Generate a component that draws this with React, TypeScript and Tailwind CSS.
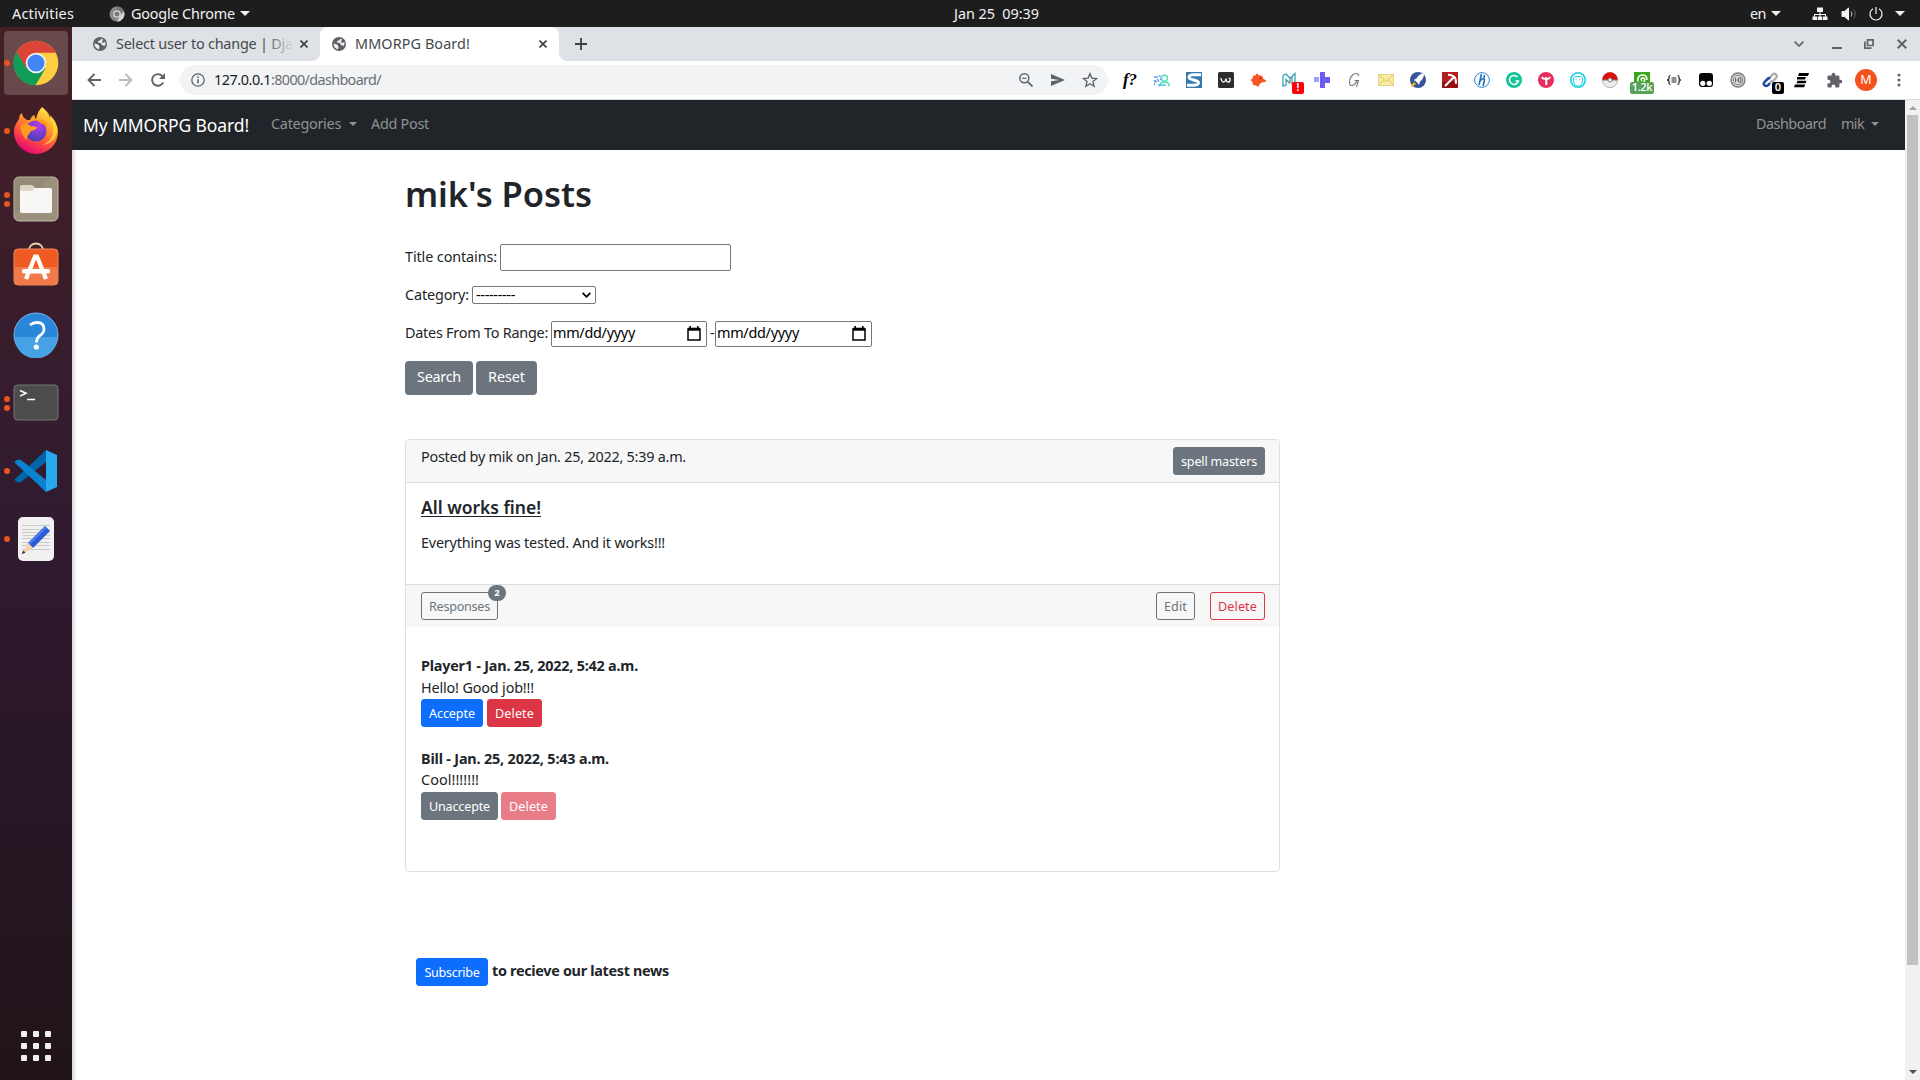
import React, { useLayoutEffect, useRef, useState } from "react";

/* Text run that spreads its letters so that it fills exactly `w` pixels. */
function T({ w, c = "", children }: { w: number; c?: string; children: string }) {
  const ref = useRef<HTMLSpanElement>(null);
  const [ls, setLs] = useState(0);
  useLayoutEffect(() => {
    if (!ref.current) return;
    const natural = ref.current.getBoundingClientRect().width - ls * children.length;
    setLs((w - natural) / children.length);
  }, []);
  return (
    <span className={"block shrink-0 whitespace-pre " + c} style={{ width: w }}>
      <span ref={ref} style={{ letterSpacing: ls }}>{children}</span>
    </span>
  );
}

const Caret = ({ c = "h-[5px] w-[10px]" }: { c?: string }) => (
  <svg viewBox="0 0 10 5" className={"shrink-0 " + c} fill="currentColor"><path d="M0 0h10L5 5z" /></svg>
);

/* ---------- top bar ---------- */
function TopBar() {
  return (
    <div className="flex h-[27px] shrink-0 items-center bg-[#1d1d1d] text-[14.4px] text-[#f2f2f2]">
      <T w={62} c="ml-[12px]">Activities</T>
      <svg viewBox="0 0 16 16" className="ml-[35px] size-4">
        <circle cx="8" cy="8" r="7.5" fill="#8a8a8a" />
        <path d="M8 .5a7.5 7.5 0 0 1 7 5H8z" fill="#777" />
        <path d="M15 5.500a7.500 7.500 0 0 1-7 10l3.500-6z" fill="#d5d5d5" />
        <circle cx="8" cy="8" r="3.600" fill="#eee" /><circle cx="8" cy="8" r="2.600" fill="#777" />
      </svg>
      <T w={104} c="ml-[6px]">Google Chrome</T>
      <Caret c="ml-[5px] h-[5px] w-[10px]" />
      <T w={85} c="ml-[704px]">Jan 25  09:39</T>
      <T w={16} c="ml-[711px]">en</T>
      <Caret c="ml-[5px] h-[5px] w-[10px]" />
      <svg viewBox="0 0 16 14" className="ml-[31px] h-[14px] w-4" fill="currentColor">
        <path d="M5 .5h6V5H5zM.5 9.500h4.500V13H.5zM5.700 9.500h4.600V13H5.700zM11 9.500h4.500V13H11zM7.500 5h1v2H14v2.500h-1V8H8.500v1.500h-1V8H3v1.500H2V7h5.500z" />
      </svg>
      <svg viewBox="0 0 16 14" className="ml-[13px] h-[14px] w-4" fill="none" stroke="currentColor">
        <path d="M1 4.500h2.500L7.500 1v12L3.500 9.500H1z" fill="currentColor" />
        <path d="M10 4.500q2 2.500 0 5" opacity=".8" /><path d="M12.500 2.500q3.500 4.500 0 9" opacity=".35" />
      </svg>
      <svg viewBox="0 0 16 16" className="ml-[11px] size-4" fill="none" stroke="currentColor" strokeWidth="1.200">
        <path d="M8 1v7M5 2.800a6 6 0 1 0 6 0" />
      </svg>
      <Caret c="ml-[11px] h-[5px] w-[10px]" />
    </div>
  );
}

/* ---------- dock ---------- */
function DockItem({ dots = 0, active = false, children }: { dots?: number; active?: boolean; children: React.ReactNode }) {
  return (
    <div className="flex h-[64px] shrink-0 items-center">
      <div className="flex w-[4px] flex-col gap-[3px]">
        {Array.from({ length: dots }, (_, i) => (
          <i key={i} className="relative z-10 ml-[4px] size-[6px] rounded-full bg-[#e95420]" />
        ))}
      </div>
      <div className={"flex size-[64px] items-center justify-center rounded-[4px] " + (active ? "bg-[#694a4c]" : "")}>{children}</div>
    </div>
  );
}

function Dock() {
  return (
    <div className="flex w-[72px] shrink-0 flex-col gap-1 bg-linear-to-b from-[#451f25] via-[#2f1a30] to-[#201419] pt-[4px]">
      <DockItem dots={1} active>
        <svg viewBox="0 0 46 46" className="size-[46px]">
          <circle cx="23" cy="23" r="22.300" fill="#ffcd40" />
          <path d="M23 23 32.500 28.500 22.500 45.300A22.300 22.300 0 0 1 3.500 12z" fill="#0f9d58" />
          <path d="M3.500 12A22.300 22.300 0 0 1 42.800 12.800H23l-9.500 15.700z" fill="#db4437" />
          <circle cx="23" cy="23" r="10.300" fill="#f1f1f1" /><circle cx="23" cy="23" r="8.600" fill="#4285f4" />
        </svg>
      </DockItem>
      <DockItem dots={1}>
        <svg viewBox="0 0 46 48" className="h-[48px] w-[46px] -translate-y-px">
          <defs>
            <linearGradient id="fx" x1=".8" y1="0" x2=".3" y2="1"><stop offset="0" stopColor="#fff44f" /><stop offset=".35" stopColor="#ffa127" /><stop offset=".68" stopColor="#ff4b42" /><stop offset="1" stopColor="#e3007c" /></linearGradient>
            <radialGradient id="fp" cx=".65" cy=".2" r=".8"><stop offset="0" stopColor="#b63cf5" /><stop offset="1" stopColor="#4a3fb0" /></radialGradient>
          </defs>
          <path d="M29 1c4 3 7 7 8 11 1-1 0-3 0-3 5 5 8 11 8 17a22 22 0 0 1-44 0C1 20 4 16 6 13c0-3 1-5 3-6 0 3 2 5 5 7h3c1-3 3-5 5-5-1 2 0 3 1 4 1-5 3-9 6-12z" fill="url(#fx)" />
          <path d="M30 2c5 4 9 10 10 18 2 10-4 17-11 19 10-1 16-8 15-17-1-5-3-9-7-12-1-3-4-6-7-8z" fill="#ffe13d" opacity=".75" />
          <circle cx="23" cy="25" r="10.500" fill="url(#fp)" />
          <path d="M7 20c4-3 8-2 11 0l6 1c0 3-3 3-6 4-2 4-5 5-4 9-4-3-6-8-7-14z" fill="#ff9a1f" />
          <path d="M24 15c5-3 10 0 11 6-2-2-4-3-6-3z" fill="#ff980e" />
        </svg>
      </DockItem>
      <DockItem dots={2}>
        <svg viewBox="0 0 46 46" className="size-[46px]">
          <rect x="1" y="1" width="44" height="44" rx="5" fill="#9b927e" stroke="#c2baa8" />
          <path d="M1.500 38 38 1.500H6a4.500 4.500 0 0 0-4.500 4.500z" fill="#8d8674" opacity=".6" />
          <path d="M7 17V11q0-2 2-2h10l4 3.500V17z" fill="#dcd5c3" />
          <path d="M7 15h12l3-3h15q2 0 2 2v21q0 2-2 2H9q-2 0-2-2z" fill="#f8f7f5" />
        </svg>
      </DockItem>
      <DockItem>
        <svg viewBox="0 0 46 44" className="h-[44px] w-[46px] -translate-y-[3px]">
          <path d="M16 9V8a7 6.500 0 0 1 14 0v1" fill="none" stroke="#e9d2a7" strokeWidth="1.800" />
          <rect x="1" y="7" width="44" height="36" rx="4" fill="#ef5b22" stroke="#f28a5c" />
          <path d="M1.500 25h43v14q0 3.500-3.500 3.500H5q-3.500 0-3.500-3.500z" fill="#f27a49" />
          <path d="m13 37 9-22.500h2L33 37" fill="none" stroke="#fff" strokeWidth="4.200" />
          <rect x="9" y="27" width="28" height="4.500" rx="2" fill="#fff" />
        </svg>
      </DockItem>
      <DockItem>
        <svg viewBox="0 0 46 46" className="size-[46px]">
          <circle cx="23" cy="23" r="22" fill="#2a86d8" stroke="#79b9e8" />
          <path d="M1.500 25h43a21.500 21.500 0 0 1-43 0z" fill="#46a2e4" />
          <path d="M17 13q3-2.500 7-2.500 7 0 7 6.500 0 4-4 6.500-3.500 2.500-3.500 7" fill="none" stroke="#fff" strokeWidth="2.800" /><circle cx="23.300" cy="35" r="2.600" fill="#fff" />
        </svg>
      </DockItem>
      <DockItem dots={2}>
        <svg viewBox="0 0 46 38" className="h-[38px] w-[46px]">
          <rect x="1" y="1" width="44" height="35" rx="3.500" fill="#4c4c4c" stroke="#777" />
          <path d="m7 6.500 6 2.800-6 2.800M14 15.500h8" fill="none" stroke="#fff" strokeWidth="1.600" />
        </svg>
      </DockItem>
      <DockItem dots={1}>
        <svg viewBox="0 0 44 44" className="size-[44px]">
          <path d="M1 30 32 1v12L7 33q-2 1-4 0l-2-1.500q-1-1 0-1.500z" fill="#0065a9" />
          <path d="M1 14 32 43V31L7 11q-2-1-4 0l-2 1.500q-1 1 0 1.500z" fill="#0a82cf" />
          <path d="M32 1 43 6v32l-11 5V1z" fill="#27a8ef" />
        </svg>
      </DockItem>
      <DockItem dots={1}>
        <svg viewBox="0 0 38 46" className="h-[46px] w-[38px]">
          <rect x="1" y="1" width="36" height="44" rx="5" fill="#f0f0f0" />
          <path d="M5 9.500h28M5 13.500h28M5 16.500h28M5 19.500h28M5 22.500h28M5 26.500h28M5 29.500h28M5 33.500h28" stroke="#ccc" />
          <path d="m11 27 17-17 5 5-17 17z" fill="#2b5bd7" /><path d="m11 27 17-17 1.700 1.700-17 17z" fill="#4f7df0" />
          <path d="m11 27 5 5-9 5-2.300 1z" fill="#f3d3a9" /><path d="m6.200 34.500 2.400 2.200L4.700 38z" fill="#333" />
        </svg>
      </DockItem>
      <div className="mt-auto mb-[19px] ml-[21px] grid w-[30px] grid-cols-3 gap-[6px]">
        {Array.from({ length: 9 }, (_, i) => <i key={i} className="size-[6px] rounded-[1px] bg-[#f0eeec]" />)}
      </div>
    </div>
  );
}

/* ---------- browser chrome ---------- */
const Globe = ({ c }: { c: string }) => (
  <svg viewBox="0 0 14 14" className={"size-[14px] shrink-0 " + c}>
    <circle cx="7" cy="7" r="7" fill="#5f6368" />
    <path d="M1.500 6.500 5 7.500l1.500 2L6 12.500Q1.500 11 1.500 6.500zM8.500 1.800 7 3.500 5 4v1.500l3 .5 1 2 2.500 1q1.500-2 1-4L10 6 8.800 4.500l1.500-1.700z" fill="#fff" opacity=".9" />
  </svg>
);
const X = ({ c = "" }: { c?: string }) => (
  <svg viewBox="0 0 8 8" className={"size-2 shrink-0 " + c} stroke="currentColor" strokeWidth="1.600"><path d="m.5.5 7 7m0-7-7 7" /></svg>
);

function TabStrip() {
  return (
    <div className="flex h-[34px] shrink-0 items-center bg-[#dee1e6] text-[14.4px] text-[#45494d]">
      <div className="flex h-full w-[248px] shrink-0 items-center">
        <Globe c="ml-[21px]" />
        <div className="relative ml-[9px] w-[176px]">
          <T w={177}>Select user to change | Dja</T>
          <div className="absolute inset-y-0 -right-[2px] w-[30px] bg-linear-to-r from-transparent to-[#dee1e6]" />
        </div>
        <X c="ml-[8px] text-[#3c4043]" />
      </div>
      <div className="relative flex h-full w-[239px] shrink-0 items-center rounded-t-[8px] bg-white">
        <svg viewBox="0 0 8 8" className="absolute bottom-0 -left-2 size-2" fill="#fff"><path d="M8 0v8H0a8 8 0 0 0 8-8z" /></svg>
        <svg viewBox="0 0 8 8" className="absolute -right-2 bottom-0 size-2" fill="#fff"><path d="M0 0v8h8a8 8 0 0 1-8-8z" /></svg>
        <Globe c="ml-[12px]" />
        <T w={115} c="ml-[9px]">MMORPG Board!</T>
        <X c="ml-[69px] text-[#3c4043]" />
      </div>
      <svg viewBox="0 0 12 12" className="ml-[16px] size-3" stroke="#3c4043" strokeWidth="1.800"><path d="M6 0v12M0 6h12" /></svg>
      <div className="mr-[13px] ml-auto flex items-center text-[#5f6368]">
        <svg viewBox="0 0 10 6" className="h-[6px] w-[10px]" fill="none" stroke="currentColor" strokeWidth="1.700"><path d="m.6.600 4.400 4.400L9.400.600" /></svg>
        <i className="mt-[8px] ml-[28px] h-[2px] w-[10px] bg-[#5f6368]" />
        <svg viewBox="0 0 10 10" className="ml-[22px] size-[10px]" fill="none" stroke="currentColor" strokeWidth="1.700"><path d="M3.500.900h5.600v5.600H3.500zM.9 2.500v6.700h6.600" /></svg>
        <svg viewBox="0 0 10 10" className="ml-[23px] size-[10px]" stroke="currentColor" strokeWidth="2"><path d="m.7.700 8.600 8.600m0-8.600L.7 9.300" /></svg>
      </div>
    </div>
  );
}

const Ext = ({ children }: { children: React.ReactNode }) => (
  <div className="relative flex w-8 shrink-0 items-center justify-center">{children}</div>
);
const S = ({ children }: { children: React.ReactNode }) => (
  <svg viewBox="0 0 16 16" className="size-4" fill="none">{children}</svg>
);

function Extensions() {
  return (
    <div className="ml-[6px] flex">
      <Ext><span className="font-['Liberation_Serif'] text-[17px] leading-4 font-bold text-black italic">f?</span></Ext>
      <Ext><S>
        <g stroke="#4d8df0" strokeWidth="1.300"><circle cx="5" cy="6" r="2.200" strokeDasharray="2 1" /><path d="M0 13q1-4 5-4M0 5h2M0 9h2" strokeDasharray="2 1" /></g>
        <g stroke="#4fe0b5" strokeWidth="1.400"><circle cx="10.500" cy="6.300" r="3" /><path d="M5.500 14.500q.5-4.500 5-4.500t5 4.500" /><path d="M4 13h8" stroke="#3fc4d8" /></g>
      </S></Ext>
      <Ext><S><rect width="16" height="16" fill="#3579ac" /><path d="M15 2.800H7.500Q3 2.800 3 5.300c0 3.200 9.500 2.200 9.500 5.400 0 2.500-3 2.600-6 2.600H1" stroke="#fff" strokeWidth="2.900" /></S></Ext>
      <Ext><S><rect width="16" height="16" rx="1.500" fill="#2d2d2d" /><path d="M3 6q.5 4 2.500 4T8 6.500Q8 10 10.300 10T12 6.500L10.500 6" stroke="#fff" strokeWidth="1.300" /></S></Ext>
      <Ext><S><path d="m.5 8 2-1.500L3 4l3-1 1-2 1.500 2 4 1 .5 2.500L16 8.500l-.5 1.500-4 .5-2 2L8 15l-2-1.500-3-.5-.5-3z" fill="#fb5424" /><circle cx="10.500" cy="6.500" r=".8" fill="#7c2108" /></S></Ext>
      <Ext><S><path d="M1 3.200v11L4 13V7.500l4 4M1 3.200 4 2l4 4.500L13 1.500v12M8 6.500v5M10 5v7l3-2" stroke="#2c9ab0" strokeWidth="1.200" /><path d="M7.500 8v3" stroke="#ee8a4c" strokeWidth="1.300" /></S>
        <span className="absolute top-[10px] left-[18px] flex h-3 w-3 items-center justify-center rounded-[2px] bg-[#fd0008] text-[10px] font-bold text-white">!</span></Ext>
      <Ext><S><path d="M6 0h5v5h5v6h-5v5H6v-5z" fill="#6c5cf6" /><path d="M0 5h5v5H0z" fill="#9aa3f8" /></S></Ext>
      <Ext><S><path d="M12.500 4q0-3-3-2.500C5.500 2 3.500 7 3.500 10.500c0 5 5.500 3.500 7.500-2H8.500M11 8.500h1.500Q11 13 10.500 15" stroke="#777" strokeWidth="1.100" /></S></Ext>
      <Ext><S><rect x=".5" y="2.500" width="15" height="11" fill="#f9eda1" stroke="#e6d48b" /><path d="m1 3 7 6.500L15 3M1 13l5-5.500M15 13l-5-5.500" stroke="#d9c470" /></S></Ext>
      <Ext><S><circle cx="8" cy="8" r="8" fill="#35549b" /><path d="M14 1.500q-5 0-7.500 5L3.500 8l2 1 2 2 1.500 2 1-3.500q4-3 4-8z" fill="#fff" /><path d="m1 14 3-4 2 2-4 3z" fill="#fcb813" /></S></Ext>
      <Ext><S><rect width="16" height="16" fill="#b41e21" /><path d="M0 10h16v6H0z" fill="#930f12" /><path d="m3 14 8.500-8.500M6 2.700q5 .3 7 3 1.300 2 1 6" stroke="#fff" strokeWidth="2" /></S></Ext>
      <Ext><S><circle cx="8" cy="8" r="7.400" stroke="#3582c8" /><path d="M7.500 2 5 13M6 9q4-4 4.500-1l-1.500 6M10.500 3 10 6" stroke="#1f70bd" strokeWidth="1.600" /></S></Ext>
      <Ext><S><circle cx="8" cy="8" r="8" fill="#15c39a" /><path d="M11.500 5A4.500 4.500 0 1 0 12.400 9H9.500" stroke="#fff" strokeWidth="1.500" /></S></Ext>
      <Ext><S><circle cx="8" cy="8" r="8" fill="#e62e5c" /><path d="M3.800 5q2 3 4.200 1 2.200 2 4.200-1" stroke="#fff" strokeWidth="1.800" /><path d="M8.300 6v7" stroke="#fff" strokeWidth="2" /></S></Ext>
      <Ext><S><circle cx="8" cy="8" r="7.200" stroke="#19cfe0" strokeWidth="1.600" /><path d="M3.500 9q-1-4 2-4.500h5q3 .5 2 4.500-1 5-4.500 5T3.500 9z" stroke="#19cfe0" /><path d="M5.500 7.200h1M9.500 7.200h1" stroke="#11a7b8" /></S></Ext>
      <Ext><S><circle cx="8" cy="8" r="7.600" fill="#ededed" stroke="#999" strokeWidth=".7" /><path d="M.3 8a7.700 7.700 0 0 1 15.400 0z" fill="#db0f0f" /><path d="M.4 8h15.200" stroke="#777" /><circle cx="8" cy="8" r="2" fill="#fff" stroke="#777" /></S></Ext>
      <Ext><S><rect width="16" height="16" fill="#39a81f" /><path d="M4 9.500Q3 3.500 8 3t5 5M8 9q-2-3 1-3t1 4" stroke="#fff" strokeWidth="1.500" /></S>
        <span className="absolute top-[10px] left-[4px] flex h-3 w-6 items-center justify-center rounded-[2px] bg-[#58a15a] font-['Open_Sans'] text-[11px] font-semibold tracking-[-0.3px] text-white">1.2k</span></Ext>
      <Ext><S><path d="M4.500 3.500Q3 3.500 3 5v2L1.500 8 3 9v2q0 1.500 1.500 1.500M11.500 3.500Q13 3.500 13 5v2l1.500 1L13 9v2q0 1.500-1.500 1.500M5.500 6h5M5.500 8h5M5.500 10h5" stroke="#222" strokeWidth="1.200" /></S></Ext>
      <Ext><S><rect x="1" y="1" width="14" height="14" rx="3" fill="#060606" /><circle cx="4.800" cy="11.300" r="2.600" fill="#fff" /><circle cx="11.300" cy="11.300" r="2.600" fill="#fff" /></S></Ext>
      <Ext><S><circle cx="8" cy="8" r="7" fill="#d6d6d6" stroke="#7b7b7b" strokeWidth="1.300" /><circle cx="8" cy="8" r="4.800" stroke="#8a8a8a" /><path d="M5.500 6v4M5.500 8h2M8.500 6v4h2.500V6z" stroke="#666" /></S></Ext>
      <Ext><S><path d="m8 5 2.500-2.500q2-1.500 3.500 0t0 3.500L11 9q-2 1-3 0" stroke="#aaa" strokeWidth="2.300" /><path d="M8.500 6.500q-1.500-1-3 .5L2.500 10q-1.500 2 0 3.300t3.500 0L8 11" stroke="#254b9f" strokeWidth="2.500" /></S>
        <span className="absolute top-[10px] left-[18px] flex h-3 w-3 items-center justify-center rounded-[2px] bg-black text-[11px] font-semibold text-white">0</span></Ext>
      <Ext><S><path d="M5 1h10l-1 3H4zM3 5h9l-1 2.600H3zM3.500 8.700h9l-1 2.600h-9zM1 12.500h10l-.7 2.700H0z" fill="#000" /></S></Ext>
      <Ext><svg viewBox="0 0 24 24" className="size-[17px]" fill="#5f6368"><path d="M20.500 11H19V7a2 2 0 0 0-2-2h-4V3.500a2.500 2.500 0 0 0-5 0V5H4a2 2 0 0 0-2 2v3.800h1.500a2.700 2.700 0 0 1 0 5.400H2V20a2 2 0 0 0 2 2h3.800v-1.500a2.700 2.700 0 0 1 5.400 0V22H17a2 2 0 0 0 2-2v-4h1.500a2.500 2.500 0 0 0 0-5z" /></svg></Ext>
      <Ext><span className="-my-1 flex size-[22px] items-center justify-center rounded-full bg-[#f4511e] text-[12.500px] text-white">M</span></Ext>
      <Ext><svg viewBox="0 0 4 14" className="ml-px h-[14px] w-1" fill="#5f6368"><circle cx="2" cy="2" r="1.500" /><circle cx="2" cy="7" r="1.500" /><circle cx="2" cy="12" r="1.500" /></svg></Ext>
    </div>
  );
}

function Toolbar() {
  return (
    <div className="flex h-[39px] shrink-0 items-center border-b border-[#dadce0] bg-white text-[14.4px]">
      <svg viewBox="0 0 14 14" className="ml-[15px] size-[14px]" fill="none" stroke="#5f6368" strokeWidth="1.800"><path d="M14 7H1.500M7.500 1l-6 6 6 6" /></svg>
      <svg viewBox="0 0 14 14" className="ml-[18px] size-[14px]" fill="none" stroke="#babcbe" strokeWidth="1.800"><path d="M0 7h12.500M6.500 1l6 6-6 6" /></svg>
      <svg viewBox="0 0 14 14" className="ml-[18px] size-[14px]" fill="none" stroke="#5f6368" strokeWidth="1.900"><path d="M12.200 9.400A5.800 5.800 0 1 1 11.200 3l1 1" /><path d="M14 0v6H8z" fill="#5f6368" stroke="none" /></svg>
      <div className="ml-[15px] flex h-[30px] w-[928px] shrink-0 items-center rounded-full bg-[#f1f3f4]">
        <svg viewBox="0 0 14 14" className="ml-[11px] size-[14px]" fill="none" stroke="#5f6368" strokeWidth="1.300"><circle cx="7" cy="7" r="6.200" /><path d="M7 6.200v4M7 3.400v1.500" strokeWidth="1.600" /></svg>
        <T w={57} c="ml-[9px] text-[#202124]">127.0.0.1</T>
        <T w={110} c="text-[#6b6f74]">:8000/dashboard/</T>
        <svg viewBox="0 0 14 14" className="ml-[638px] size-[14px]" fill="none" stroke="#5f6368" strokeWidth="1.500"><circle cx="5.300" cy="5.300" r="4.500" /><path d="m8.800 8.800 4.700 4.700" strokeWidth="1.800" /><path d="M3.200 5.300h4.200" strokeWidth="1.200" /></svg>
        <svg viewBox="0 0 14 12" className="ml-[18px] h-3 w-[14px]" fill="#5f6368"><path d="m0 0 14 6-14 6V7.300L8 6 0 4.700z" /></svg>
        <svg viewBox="0 0 24 24" className="ml-[17px] size-[16px]" fill="none" stroke="#5f6368" strokeWidth="2"><path d="m12 2.500 2.800 6.600 7.200.6-5.500 4.700 1.700 7L12 17.600l-6.200 3.800 1.700-7L2 9.700l7.200-.6z" /></svg>
      </div>
      <Extensions />
    </div>
  );
}

/* ---------- page ---------- */
function Navbar() {
  return (
    <div className="flex h-[50px] shrink-0 items-center bg-[#212529] pb-[2px] text-[14.4px] text-[#909294]">
      <T w={166} c="ml-[11px] pt-[2px] text-[17.500px] text-white">My MMORPG Board!</T>
      <T w={70} c="ml-[22px]">Categories</T>
      <Caret c="mt-[-1px] ml-[8px] h-[4px] w-[8px]" />
      <T w={58} c="ml-[14px]">Add Post</T>
      <T w={70} c="ml-auto">Dashboard</T>
      <T w={23} c="ml-[15px]">mik</T>
      <Caret c="mt-[-1px] mr-[26px] ml-[7px] h-[4px] w-[8px]" />
    </div>
  );
}

function Btn({ w, tw, c, children }: { w: number; tw: number; c: string; children: string }) {
  return (
    <button className={"flex h-[28px] shrink-0 items-center justify-center rounded-[3px] border pt-[2px] text-[12.600px] " + c} style={{ width: w }}>
      <T w={tw} c="text-left">{children}</T>
    </button>
  );
}
const GRAY = "border-[#6c757d] bg-[#6c757d] text-white";
const BLUE = "border-[#0d6efd] bg-[#0d6efd] text-white";
const RED = "border-[#dc3545] bg-[#dc3545] text-white";

function DateBox({ w, c }: { w: number; c: string }) {
  return (
    <div className={"flex h-[26px] shrink-0 items-center rounded-[2px] border border-[#767676] pl-[1px] text-black " + c} style={{ width: w }}>
      <T w={82}>mm/dd/yyyy</T>
      <svg viewBox="0 0 14 15" className="mr-[5px] ml-auto h-[15px] w-[14px]" fill="none" stroke="#000"><path d="M1 3h12v11H1z" strokeWidth="1.500" /><path d="M1 3.200h12" strokeWidth="3" /><path d="M3.200 0v3M10.800 0v3" strokeWidth="1.600" /></svg>
    </div>
  );
}

function Form() {
  return (
    <div className="flex flex-col">
      <div className="mt-[34px] flex h-[27px] items-center">
        <T w={92} c="-mt-px">Title contains:</T>
        <div className="ml-[3px] h-[27px] w-[231px] rounded-[2px] border border-[#767676]" />
      </div>
      <div className="mt-[15px] flex h-[18px] items-center">
        <T w={64} c="-mt-px">Category:</T>
        <div className="ml-[3px] flex h-[18px] w-[124px] items-center rounded-[2px] border border-[#767676] pr-[4px] pl-[3px] text-black">
          <T w={39} c="-mt-px">---------</T>
          <svg viewBox="0 0 10 6" className="ml-auto h-[6px] w-[9px]" fill="none" stroke="#000" strokeWidth="2"><path d="m.7.700 4.300 4.300L9.300.700" /></svg>
        </div>
      </div>
      <div className="mt-[17px] flex h-[26px] items-center">
        <T w={143} c="-mt-[3px]">Dates From To Range:</T>
        <DateBox w={156} c="ml-[3px] pb-[2px]" />
        <T w={5} c="ml-[3px] -mt-[3px]">-</T>
        <DateBox w={157} c="pb-[2px]" />
      </div>
      <div className="mt-[14px] flex gap-[3px] text-white">
        <button className="flex h-[34px] w-[68px] items-center justify-center rounded-[4px] bg-[#6c757d] pb-[2px]"><T w={44} c="text-left">Search</T></button>
        <button className="flex h-[34px] w-[61px] items-center justify-center rounded-[4px] bg-[#6c757d] pb-[2px]"><T w={37} c="text-left">Reset</T></button>
      </div>
    </div>
  );
}

function Card() {
  return (
    <div className="mt-[44px] flex h-[433px] w-[875px] flex-col rounded-[4px] border border-[#dfdfdf]">
      <div className="flex h-[43px] justify-between rounded-t-[3px] border-b border-[#dcdcdc] bg-[#f7f7f7] px-[15px] pt-[7px] pr-[14px]">
        <T w={265} c="leading-[20px]">Posted by mik on Jan. 25, 2022, 5:39 a.m.</T>
        <Btn w={92} tw={76} c={GRAY}>spell masters</Btn>
      </div>
      <div className="h-[101px] px-[15px] pt-[13px]">
        <T w={120} c="text-[17.500px] leading-[22px] font-semibold underline decoration-1 underline-offset-2">All works fine!</T>
        <T w={244} c="mt-[14px] leading-[22px]">Everything was tested. And it works!!!</T>
      </div>
      <div className="flex h-[43px] border-t border-[#dcdcdc] bg-[#f7f7f7] px-[15px] pt-[7px] pr-[14px]">
        <div className="relative">
          <Btn w={77} tw={61} c="border-[#6c757d] text-[#6c757d]">Responses</Btn>
          <span className="absolute -top-[7px] left-[67px] flex h-[16px] w-[18px] items-center justify-center rounded-full bg-[#6c757d] text-[9.500px] font-bold text-white">2</span>
        </div>
        <div className="ml-auto flex gap-[15px]">
          <Btn w={39} tw={23} c="border-[#6c757d] text-[#6c757d]">Edit</Btn>
          <Btn w={55} tw={39} c="border-[#dc3545] text-[#dc3545]">Delete</Btn>
        </div>
      </div>
      <div className="flex flex-col px-[15px] pt-[28px]">
        <T w={217} c="leading-[22px] font-bold">Player1 - Jan. 25, 2022, 5:42 a.m.</T>
        <T w={113} c="leading-[22px]">Hello! Good job!!!</T>
        <div className="flex gap-[4px]">
          <Btn w={62} tw={46} c={BLUE}>Accepte</Btn>
          <Btn w={55} tw={39} c={RED}>Delete</Btn>
        </div>
        <T w={188} c="mt-[21px] leading-[22px] font-bold">Bill - Jan. 25, 2022, 5:43 a.m.</T>
        <T w={58} c="leading-[20px]">Cool!!!!!!!</T>
        <div className="mt-[2px] flex gap-[3px]">
          <Btn w={77} tw={61} c={GRAY}>Unaccepte</Btn>
          <Btn w={55} tw={39} c="border-[#e87c87] bg-[#e87c87] text-white">Delete</Btn>
        </div>
      </div>
    </div>
  );
}

export default function App() {
  return (
    <div className="flex h-[1080px] w-[1920px] flex-col overflow-hidden bg-white font-['Noto_Sans',sans-serif]">
      <TopBar />
      <div className="flex min-h-0 grow">
        <Dock />
        <div className="flex min-w-0 grow flex-col">
          <TabStrip />
          <Toolbar />
          <div className="flex min-h-0 grow">
            <div className="flex min-w-0 grow flex-col">
              <Navbar />
              <div className="flex grow">
                <div className="w-[5px] bg-linear-to-r from-[#d9d9d9] to-white" />
                <div className="flex flex-col pt-[22px] pl-[328px] text-[14.4px] text-[#212529]">
                  <T w={187} c="h-[38px] text-[34.500px] leading-[44px] font-semibold">mik's Posts</T>
                  <Form />
                  <Card />
                  <div className="mt-[86px] ml-[11px] flex items-start">
                    <Btn w={72} tw={55} c={BLUE}>Subscribe</Btn>
                    <T w={177} c="ml-[4px] leading-[26px] font-bold">to recieve our latest news</T>
                  </div>
                </div>
              </div>
            </div>
            <div className="flex w-[15px] shrink-0 flex-col items-center bg-[#f1f1f1] py-[6px]">
              <svg viewBox="0 0 8 4" className="h-1 w-2" fill="#a3a3a3"><path d="M0 4h8L4 0z" /></svg>
              <div className="mt-[5px] h-[850px] w-[11px] bg-[#c1c1c1]" />
              <Caret c="mt-auto h-1 w-2 text-[#505050]" />
            </div>
          </div>
        </div>
      </div>
    </div>
  );
}
